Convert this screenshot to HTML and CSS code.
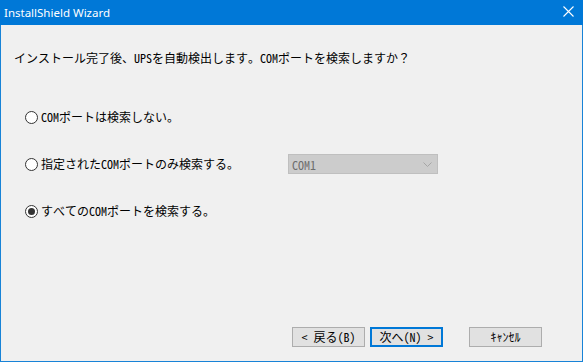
FILE: index.html
```html
<!DOCTYPE html>
<html lang="ja">
<head>
<meta charset="utf-8">
<title>InstallShield Wizard</title>
<link rel="stylesheet" href="styles.css">
</head>
<body>
<div class="window">
  <div class="titlebar">
    <span class="title">InstallShield Wizard</span>
    <svg class="close" width="11" height="11" viewBox="0 0 11 11"><path d="M0.5 0.5 L10.5 10.5 M10.5 0.5 L0.5 10.5" stroke="#ffffff" stroke-width="1.1" fill="none"/></svg>
  </div>
  <div class="content">
    <p class="question">インストール完了後、UPSを自動検出します。COMポートを検索しますか？</p>
    <div class="options">
      <div class="row">
        <label class="option"><span class="radio"></span><span class="label">COMポートは検索しない。</span></label>
      </div>
      <div class="row">
        <label class="option wide"><span class="radio"></span><span class="label">指定されたCOMポートのみ検索する。</span></label>
        <div class="combo"><span class="combo-text">COM1</span>
          <svg class="chev" width="9" height="5" viewBox="0 0 9 5"><path d="M0.5 0.5 L4.5 4.5 L8.5 0.5" stroke="#a6a6a6" stroke-width="1" fill="none"/></svg>
        </div>
      </div>
      <div class="row">
        <label class="option"><span class="radio checked"></span><span class="label">すべてのCOMポートを検索する。</span></label>
      </div>
    </div>
    <div class="footer">
      <button class="btn">&lt; 戻る(B)</button>
      <button class="btn default">次へ(N) &gt;</button>
      <button class="btn cancel">ｷｬﾝｾﾙ</button>
    </div>
  </div>
</div>
</body>
</html>
```
FILE: styles.css
```css
* { box-sizing: border-box; }
html, body { margin: 0; padding: 0; background: #f0f0f0; }
.window {
  width: 583px;
  height: 362px;
  border: 1px solid #1883d7;
  border-top: none;
  background: #f0f0f0;
  display: flex;
  flex-direction: column;
  font-family: "Noto Sans Mono CJK JP", "Noto Sans CJK JP", monospace;
  font-size: 12px;
  color: #000;
}
.titlebar {
  height: 25px;
  flex: none;
  background: #0078d7;
  color: #fff;
  display: flex;
  align-items: center;
  padding-left: 4px;
  padding-right: 9px;
  margin: 0 -1px;
}
.title {
  font-family: "Noto Sans", sans-serif;
  font-size: 11.5px;
  flex: 1;
}
.close { display: block; margin-top: -2px; }
.content {
  flex: 1;
  display: flex;
  flex-direction: column;
  padding: 25px 40px 14px 13px;
}
.question {
  margin: 0;
  line-height: 16px;
  white-space: nowrap;
}
.options {
  margin-top: 41px;
  margin-left: 11px;
  display: flex;
  flex-direction: column;
  gap: 27px;
}
.row {
  height: 20px;
  display: flex;
  align-items: center;
}
.option {
  display: flex;
  align-items: center;
  gap: 3px;
  white-space: nowrap;
}
.option.wide { width: 263px; }
.label { line-height: 16px; }
.radio {
  width: 13px;
  height: 13px;
  border: 1px solid #333;
  border-radius: 50%;
  background: #fff;
  display: flex;
  align-items: center;
  justify-content: center;
}
.radio.checked::after {
  content: "";
  width: 7px;
  height: 7px;
  border-radius: 50%;
  background: #333;
}
.combo {
  width: 150px;
  height: 20px;
  background: #cccccc;
  border: 1px solid #bfbfbf;
  display: flex;
  align-items: center;
  justify-content: space-between;
  padding: 0 5px 0 3px;
  color: #6d6d6d;
}
.chev { display: block; }
.footer {
  margin-top: auto;
  display: flex;
  justify-content: flex-end;
  gap: 5px;
}
.btn {
  width: 73px;
  height: 20px;
  background: #e1e1e1;
  border: 1px solid #adadad;
  font: inherit;
  color: #000;
  padding: 0;
  line-height: 16px;
}
.btn.default { border: 2px solid #0078d7; }
.btn.cancel { margin-left: 21px; }
```
